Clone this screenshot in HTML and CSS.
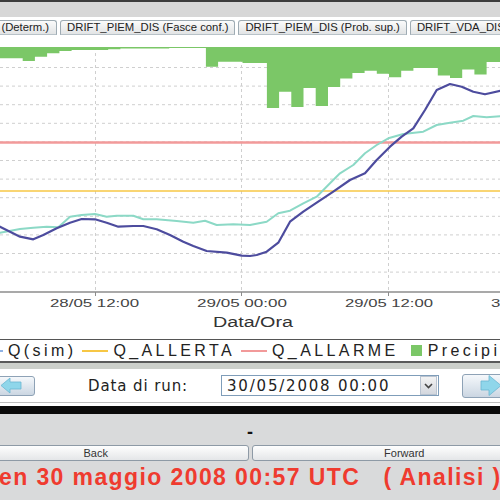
FILE: index.html
```html
<!DOCTYPE html>
<html lang="it">
<head>
<meta charset="utf-8">
<title>DRIFT_PIEM_DIS</title>
<link rel="stylesheet" href="styles.css">
</head>
<body>
<div class="topbar"></div>
<div class="tabs">
  <div class="tab first">DRIFT_PIEM_DIS (Determ.)</div>
  <div class="tab">DRIFT_PIEM_DIS (Fasce conf.)</div>
  <div class="tab">DRIFT_PIEM_DIS (Prob. sup.)</div>
  <div class="tab">DRIFT_VDA_DIS (Determ.)</div>
</div>

<svg class="chart" width="500" height="304" viewBox="0 35 500 304" xmlns="http://www.w3.org/2000/svg">
  <g class="grid">
    <line x1="0" y1="67.5" x2="500" y2="67.5"/>
    <line x1="0" y1="86.1" x2="500" y2="86.1"/>
    <line x1="0" y1="104.7" x2="500" y2="104.7"/>
    <line x1="0" y1="123.3" x2="500" y2="123.3"/>
    <line x1="0" y1="141.9" x2="500" y2="141.9"/>
    <line x1="0" y1="160.5" x2="500" y2="160.5"/>
    <line x1="0" y1="179.1" x2="500" y2="179.1"/>
    <line x1="0" y1="197.7" x2="500" y2="197.7"/>
    <line x1="0" y1="216.3" x2="500" y2="216.3"/>
    <line x1="0" y1="234.9" x2="500" y2="234.9"/>
    <line x1="0" y1="253.5" x2="500" y2="253.5"/>
    <line x1="0" y1="272.1" x2="500" y2="272.1"/>
    <line x1="95.5" y1="47" x2="95.5" y2="292"/>
    <line x1="241.5" y1="47" x2="241.5" y2="292"/>
    <line x1="388.5" y1="47" x2="388.5" y2="292"/>
  </g>
  <path class="precip" d="M-2 47 V58.3 H22.7 V61 H34.9 V56.7 H47.1 V53.3 H59.4 V51 H71.6 V50 H108.2 V49.3 H120.4 V48.5 H169.2 V48 H205.9 V66.7 H218.1 V61.7 H242.5 V63 H266.9 V108 H279.1 V91.7 H291.3 V107 H303.5 V88 H315.7 V106 H328 V87 H340.2 V78.5 H352.4 V73 H364.6 V70.7 H376.8 V73.7 H389 V77.3 H401.2 V70.7 H413.4 V68 H437.8 V75.5 H450 V78 H462.2 V69.5 H474.4 V74.5 H486.6 V62 H502 V47 Z"/>
  <line class="allarme" x1="0" y1="142.5" x2="500" y2="142.5"/>
  <line class="allerta" x1="0" y1="191" x2="500" y2="191"/>
  <polyline class="teal" points="-2,233 0,232.7 20,229 33.3,227.7 46.7,226.7 58.3,227.3 70,216.7 81.7,215 95,214 106.7,216.7 116.7,215.7 133.3,215.7 143.3,219.3 156.7,219.3 176.7,221 193.3,222.7 205,220.7 216.7,225 233.3,224.3 250,225 266.7,221.7 278.3,213.3 290,210.7 303.3,203.3 316.7,196.7 330,183.3 340,173.3 353.3,165 365,153.3 376.7,145 388.3,138.3 403.3,134 423.3,131.7 436.7,125 450,122.7 463.3,120.7 473.3,116 486.7,117.3 502,116"/>
  <polyline class="navy" points="-2,225.7 0,226.7 10,231.7 20,236.7 33.3,239.3 43.3,235 56.7,228.3 70,222.7 81.7,219 95,219.3 106.7,222.7 118.3,226.7 133.3,226 143.3,226 156.7,229.3 170,235 183.3,241.7 193.3,246 206.7,251 226.7,252.7 241.7,255.7 250,256 256.7,255 266.7,251.7 278.3,242.7 290,221.7 303.3,211.7 316.7,202.7 333.3,191.7 350,180 365,173.3 376.7,160 390,146.7 401.7,136.7 413.3,128.3 425,110 436.7,90 450,84 461.7,86.7 473.3,91.7 485,94.3 502,90.5"/>
  <line class="axis" x1="0" y1="292" x2="500" y2="292"/>
  <g class="ticks">
    <line x1="95.5" y1="292" x2="95.5" y2="296"/>
    <line x1="241.5" y1="292" x2="241.5" y2="296"/>
    <line x1="388.5" y1="292" x2="388.5" y2="296"/>
  </g>
  <text class="tick-label" x="50" y="307" textLength="89" lengthAdjust="spacingAndGlyphs">28/05 12:00</text>
  <text class="tick-label" x="197" y="307" textLength="90" lengthAdjust="spacingAndGlyphs">29/05 00:00</text>
  <text class="tick-label" x="345" y="307" textLength="88" lengthAdjust="spacingAndGlyphs">29/05 12:00</text>
  <text class="tick-label" x="491" y="307" textLength="89" lengthAdjust="spacingAndGlyphs">30/05 00:00</text>
  <text class="axis-title" x="213" y="326.5" textLength="80" lengthAdjust="spacingAndGlyphs">Data/Ora</text>
</svg>

<div class="legend">
  <div class="lg-item"><span class="lg-line sim"></span><span class="lg-label">Q(sim)</span></div>
  <div class="lg-item"><span class="lg-line allerta"></span><span class="lg-label">Q_ALLERTA</span></div>
  <div class="lg-item"><span class="lg-line allarme"></span><span class="lg-label">Q_ALLARME</span></div>
  <div class="lg-item"><span class="lg-square"></span><span class="lg-label">Precipitazione</span></div>
</div>
<div class="sep"></div>

<div class="runbar">
  <button class="arrow-btn prev" aria-label="Precedente">
    <svg width="22" height="17" viewBox="0 0 22 17"><polygon class="arrow-shape" points="1,8.5 10,1 10,5 21,5 21,12 10,12 10,16"/></svg>
  </button>
  <div class="run-label">Data di run:</div>
  <div class="select">
    <span class="select-text">30/05/2008 00:00</span>
    <span class="select-btn"><svg width="9" height="6" viewBox="0 0 9 6"><path d="M1 1 L4.5 4.5 L8 1" class="chev"/></svg></span>
  </div>
  <div class="next-cell">
    <button class="arrow-btn next" aria-label="Successivo">
      <svg width="22" height="21" viewBox="0 0 22 21"><polygon class="arrow-shape" points="21,10.5 9,0.5 9,6 1,6 1,15 9,15 9,20.5"/></svg>
    </button>
  </div>
</div>
<div class="blackbar"></div>

<div class="bottom">
  <div class="dash">-</div>
  <div class="navrow">
    <button class="navbtn">Back</button>
    <button class="navbtn">Forward</button>
  </div>
  <div class="status">Ven 30 maggio 2008 00:57 UTC   ( Analisi )</div>
</div>
</body>
</html>
```

FILE: styles.css
```css
html, body {
  margin: 0;
  padding: 0;
  width: 500px;
  height: 500px;
  overflow: hidden;
  background: #ffffff;
  font-family: "Liberation Sans", Arial, sans-serif;
}

.topbar {
  height: 15px;
  border-top: 2px solid #3c3c3c;
  background: #d7d7d7;
}

.tabs {
  display: flex;
  gap: 3px;
  padding-top: 3px;
  margin-left: -101px;
  white-space: nowrap;
}

.tab {
  flex-shrink: 0;
  height: 13px;
  line-height: 13px;
  padding: 0 6px;
  border: 1px solid #9eabb3;
  border-bottom-color: #b8c2c8;
  border-radius: 3px 3px 0 0;
  background: linear-gradient(#fbfbfb, #e2e4e5);
  font-size: 11.3px;
  color: #222;
}

.tab.first {
  padding-right: 7px;
}

.chart {
  display: block;
}

.grid line {
  stroke: #cfcfcf;
  stroke-width: 1;
  stroke-dasharray: 3 3;
}

.precip {
  fill: #7bc767;
}

.allarme {
  stroke: #f29a9a;
  stroke-width: 2.5;
}

.allerta {
  stroke: #f7c745;
  stroke-width: 1.5;
}

.teal {
  fill: none;
  stroke: #8cd9c6;
  stroke-width: 2;
  stroke-linejoin: round;
}

.navy {
  fill: none;
  stroke: #4d4c9e;
  stroke-width: 2.2;
  stroke-linejoin: round;
}

.axis {
  stroke: #8c8c8c;
  stroke-width: 1.5;
}

.ticks line {
  stroke: #8c8c8c;
  stroke-width: 1;
}

.tick-label {
  font-family: "Liberation Sans", Arial, sans-serif;
  font-size: 10px;
  fill: #444;
}

.axis-title {
  font-family: "Liberation Sans", Arial, sans-serif;
  font-size: 14px;
  fill: #333;
}

.legend {
  display: flex;
  align-items: center;
  gap: 6px;
  height: 21px;
  margin-left: -23px;
  border-top: 1px solid #555;
  border-bottom: 2px solid #5a5a5a;
  white-space: nowrap;
  overflow: hidden;
}

.lg-item {
  display: flex;
  align-items: center;
  gap: 5px;
  flex-shrink: 0;
}

.lg-line {
  width: 26px;
  height: 2px;
}

.lg-line.sim {
  background: #8fb2e4;
}

.lg-line.allerta {
  background: #f7c745;
}

.lg-line.allarme {
  background: #f29a9a;
}

.lg-square {
  width: 11px;
  height: 11px;
  margin-left: 6px;
  margin-right: 1px;
  background: #7bc767;
}

.lg-label {
  font-size: 16px;
  letter-spacing: 3.4px;
  color: #222;
}

.sep {
  height: 6px;
  background: #cdd0cb;
}

.runbar {
  display: grid;
  grid-template-columns: 38px 186px 218px 1fr;
  align-items: center;
  height: 33px;
  margin-left: -3px;
  border-bottom: 1px solid #bdbdbd;
}

.arrow-btn {
  display: flex;
  align-items: center;
  flex-shrink: 0;
  padding: 0;
  height: 20px;
  border: 1px solid #8ea2b6;
  border-radius: 3px;
  background: linear-gradient(#f5f8fb, #cbd6e2);
}

.arrow-btn.prev {
  width: 38px;
  justify-content: flex-start;
  padding-left: 2px;
}

.arrow-btn.next {
  width: 42px;
  margin-left: 23px;
  justify-content: flex-end;
  padding-right: 1px;
  height: 24px;
}

.arrow-shape {
  fill: #8fd6ea;
  stroke: #6bb6d2;
  stroke-width: 0.8;
}

.run-label {
  padding-left: 53px;
  font-family: "DejaVu Sans", Verdana, sans-serif;
  font-size: 15px;
  letter-spacing: 0.9px;
  color: #222;
}

.select {
  display: flex;
  align-items: center;
  height: 19px;
  border: 1px solid #7f9db9;
  background: #fff;
}

.select-text {
  flex: 1;
  padding-left: 5px;
  font-family: "DejaVu Sans", Verdana, sans-serif;
  font-size: 15px;
  letter-spacing: 1.8px;
  color: #222;
  white-space: nowrap;
}

.select-btn {
  display: flex;
  align-items: center;
  justify-content: center;
  width: 15px;
  height: 17px;
  margin-right: 1px;
  border: 1px solid #b9c3d0;
  background: linear-gradient(#f3f3f3, #d3d7de);
}

.chev {
  fill: none;
  stroke: #444;
  stroke-width: 1.6;
}

.next-cell {
  display: flex;
  align-items: center;
  overflow: visible;
}

.blackbar {
  height: 8px;
  border-top: 3px solid #fff;
  background: #0a0a0a;
}

.bottom {
  width: 614px;
  height: 86px;
  margin-left: -57px;
  background: #d9dadb;
  overflow: hidden;
}

.dash {
  padding-top: 8px;
  height: 20px;
  line-height: 20px;
  text-align: center;
  font-weight: bold;
  font-size: 18px;
  color: #111;
}

.navrow {
  display: flex;
  gap: 3px;
  margin-top: 3px;
  height: 16px;
}

.navbtn {
  flex: 1;
  height: 16px;
  padding: 0;
  border: 1px solid #8e9aa6;
  border-radius: 3px;
  background: linear-gradient(#fefefe, #e4e6e8);
  font-family: "Liberation Sans", Arial, sans-serif;
  font-size: 11px;
  line-height: 12px;
  color: #333;
}

.status {
  margin-top: 2px;
  padding-left: 40.5px;
  line-height: 28px;
  white-space: pre;
  font-weight: bold;
  font-size: 23px;
  letter-spacing: 1.4px;
  color: #ef3b2f;
}
```
